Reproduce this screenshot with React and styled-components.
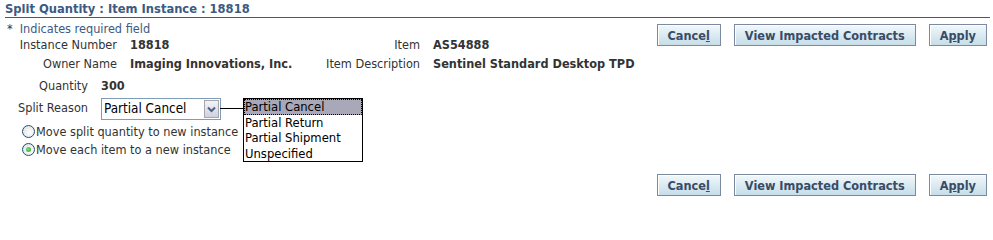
import React from "react";
import styled, { createGlobalStyle } from "styled-components";

const Global = createGlobalStyle`
  body {
    margin: 0;
    background: #ffffff;
    font-family: "DejaVu Sans Condensed", "DejaVu Sans", sans-serif;
    font-size: 12.6px;
    color: #333333;
  }
`;

const Page = styled.div`
  width: 993px;
  height: 200px;
  padding: 0 6px 0 5px;
  box-sizing: border-box;
`;

const Header = styled.h1`
  margin: 0 -3px 0 0;
  padding-top: 1px;
  height: 16px;
  font-size: 12.8px;
  font-weight: bold;
  color: #3c5a82;
  border-bottom: 1px solid #3c5a82;
  line-height: 16px;
`;

const Main = styled.div`
  display: flex;
  justify-content: space-between;
`;

const Left = styled.div`
  display: flex;
  flex-direction: column;
`;

const Required = styled.div`
  display: flex;
  gap: 7px;
  margin-top: 3px;
  padding-left: 2px;
  color: #3c5a82;
  height: 15px;
  line-height: 15px;
`;

const Star = styled.span`
  color: #333333;
`;

const Details = styled.div`
  display: grid;
  grid-template-columns: 112px 165px 112px auto;
  column-gap: 13px;
  margin-top: -1px;
`;

const Label = styled.div`
  text-align: right;
  white-space: nowrap;
  height: ${(p) => p.h || 19}px;
  line-height: ${(p) => p.h || 19}px;
`;

const Value = styled.div`
  font-weight: bold;
  white-space: nowrap;
  height: ${(p) => p.h || 19}px;
  line-height: ${(p) => p.h || 19}px;
`;

const Lower = styled.div`
  display: grid;
  grid-template-columns: 83px auto;
  column-gap: 13px;
  margin-top: 2px;
`;

const SelectWrap = styled.div`
  position: relative;
  margin-top: 1px;
  width: 120px;
  height: 22px;
  display: flex;
  border: 1px solid #7f9db9;
  box-sizing: border-box;
`;

const SelectText = styled.div`
  flex: 1;
  padding-left: 2px;
  line-height: 20px;
  font-size: 13.4px;
  color: #000;
  white-space: nowrap;
`;

const ArrowBox = styled.div`
  width: 15px;
  margin: 1px;
  border: 1px solid #a7a6aa;
  background: linear-gradient(#f3f3f6, #cfd1e0);
  display: flex;
  align-items: center;
  justify-content: center;
  box-sizing: border-box;
`;

const Connector = styled.div`
  position: absolute;
  left: 118px;
  top: 9px;
  width: 23px;
  height: 1px;
  background: #000;
`;

const List = styled.ul`
  position: absolute;
  left: 141px;
  top: -1px;
  margin: 0;
  padding: 0;
  list-style: none;
  width: 120px;
  border: 1px solid #000;
  background: #fff;
  box-sizing: border-box;
  z-index: 2;
`;

const Option = styled.li`
  height: 15.5px;
  line-height: 15px;
  padding-left: 1px;
  font-size: 12.9px;
  color: #000;
  white-space: nowrap;
  background: ${(p) => (p.selected ? "#a8a8b8" : "transparent")};
  outline: ${(p) => (p.selected ? "1px dotted #000" : "none")};
  outline-offset: -1px;
`;

const Radios = styled.div`
  display: flex;
  flex-direction: column;
  padding-left: 17px;
  margin-top: 2px;
`;

const RadioRow = styled.label`
  display: flex;
  align-items: center;
  height: 18px;
  gap: 1px;
`;

const RadioCircle = styled.span`
  width: 11px;
  height: 11px;
  border-radius: 50%;
  border: 1px solid #1c5180;
  background: radial-gradient(circle at 60% 60%, #ffffff, #dcdcd8);
  display: flex;
  align-items: center;
  justify-content: center;
  &::after {
    content: "";
    display: ${(p) => (p.checked ? "block" : "none")};
    width: 5px;
    height: 5px;
    border-radius: 50%;
    background: radial-gradient(circle at 40% 40%, #7fe07f, #21a121);
  }
`;

const Buttons = styled.div`
  display: flex;
  gap: 13px;
  margin-top: ${(p) => p.top || 0}px;
  justify-content: flex-end;
`;

const Button = styled.button`
  height: 22px;
  padding: 0 10px;
  font-family: "DejaVu Sans Condensed", "DejaVu Sans", sans-serif;
  font-size: 12.6px;
  font-weight: bold;
  white-space: nowrap;
  color: #3a4b66;
  border: 1px solid #7b8aa0;
  background: linear-gradient(#f2f8fb, #d6e8f0 60%, #c6dde8);
  box-shadow: inset 1px 1px 0 #ffffff;
  cursor: pointer;
  u {
    text-decoration: underline;
  }
`;

const Bottom = styled.div`
  display: flex;
  justify-content: flex-end;
  margin-top: 16px;
`;

const Chevron = () => (
  <svg width="9" height="7" viewBox="0 0 9 7">
    <path d="M1 1.5 L4.5 5 L8 1.5" fill="none" stroke="#4d6185" strokeWidth="2" />
  </svg>
);

const ActionButtons = () => (
  <Buttons>
    <Button>
      Cance<u>l</u>
    </Button>
    <Button>View Impacted Contracts</Button>
    <Button>
      A<u>p</u>ply
    </Button>
  </Buttons>
);

const reasons = ["Partial Cancel", "Partial Return", "Partial Shipment", "Unspecified"];

export default function App() {
  return (
    <Page>
      <Global />
      <Header>Split Quantity : Item Instance : 18818</Header>
      <Main>
        <Left>
          <Required>
            <Star>*</Star>
            <span>Indicates required field</span>
          </Required>
          <Details>
            <Label>Instance Number</Label>
            <Value>18818</Value>
            <Label>Item</Label>
            <Value>AS54888</Value>
            <Label>Owner Name</Label>
            <Value>Imaging Innovations, Inc.</Value>
            <Label>Item Description</Label>
            <Value>Sentinel Standard Desktop TPD</Value>
          </Details>
          <Lower>
            <Label h={22}>Quantity</Label>
            <Value h={22}>300</Value>
            <Label h={22}>Split Reason</Label>
            <SelectWrap>
              <SelectText>Partial Cancel</SelectText>
              <ArrowBox>
                <Chevron />
              </ArrowBox>
              <Connector />
              <List>
                {reasons.map((r, i) => (
                  <Option key={r} selected={i === 0}>
                    {r}
                  </Option>
                ))}
              </List>
            </SelectWrap>
          </Lower>
          <Radios>
            <RadioRow>
              <RadioCircle />
              Move split quantity to new instance
            </RadioRow>
            <RadioRow>
              <RadioCircle checked />
              Move each item to a new instance
            </RadioRow>
          </Radios>
        </Left>
        <Buttons top={6}>
          <ActionButtons />
        </Buttons>
      </Main>
      <Bottom>
        <ActionButtons />
      </Bottom>
    </Page>
  );
}
